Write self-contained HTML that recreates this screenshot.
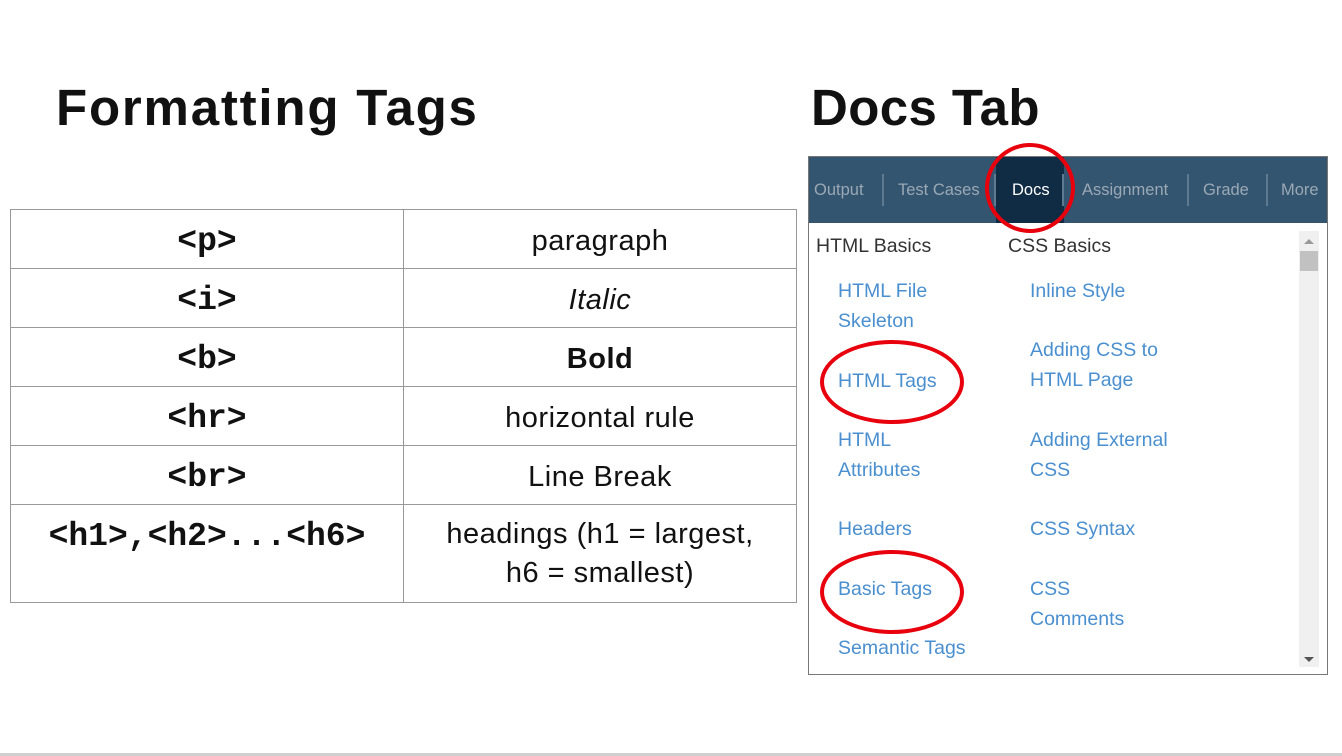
<!DOCTYPE html><html><head><style>
body{margin:0;width:1342px;height:756px;background:#fff;position:relative;overflow:hidden;font-family:"Liberation Sans",sans-serif}
.a{position:absolute}
h1{position:absolute;margin:0;font-size:51px;font-weight:bold;top:78px;line-height:60px;color:#111}
table{position:absolute;left:10px;top:209px;border-collapse:collapse;width:787px}
td{border:1px solid #999;text-align:center;font-size:29px;height:54px;padding:4px 0 0 0;color:#111;letter-spacing:0.5px}
td.c{font-family:"Liberation Mono",monospace;font-weight:bold;width:392px;font-size:33px;letter-spacing:0}
.tab{position:absolute;top:176px;font-size:16.5px;color:#9aa8b5;line-height:28px}
.sep{position:absolute;top:174px;width:2px;height:32px;background:#5d7a90}
.l{position:absolute;color:#4a8fcf;font-size:19.5px;line-height:30px}
.o{position:absolute;border:4px solid #e8000d;border-radius:50%}
</style></head><body>
<h1 style="left:56px;letter-spacing:1.8px">Formatting Tags</h1>
<h1 style="left:811px;letter-spacing:0.4px">Docs Tab</h1>
<table>
<tr><td class="c">&lt;p&gt;</td><td>paragraph</td></tr>
<tr><td class="c">&lt;i&gt;</td><td><i>Italic</i></td></tr>
<tr><td class="c">&lt;b&gt;</td><td><b>Bold</b></td></tr>
<tr><td class="c">&lt;hr&gt;</td><td>horizontal rule</td></tr>
<tr><td class="c">&lt;br&gt;</td><td>Line Break</td></tr>
<tr><td class="c" style="vertical-align:top;padding-top:13px;height:84px">&lt;h1&gt;,&lt;h2&gt;...&lt;h6&gt;</td><td style="height:97px;line-height:39px;padding-top:0">headings (h1 = largest,<br>h6 = smallest)</td></tr>
</table>
<div class="a" style="left:808px;top:156px;width:518px;height:517px;border:1px solid #777;overflow:hidden">
<div class="a" style="left:0;top:0;width:518px;height:66px;background:#34556f"></div>
<div class="a" style="left:187px;top:0;width:68px;height:66px;background:#102b44"></div>
<div class="a" style="left:490px;top:74px;width:20px;height:436px;background:#f0f0f0"></div>
<div class="a" style="left:491px;top:94px;width:18px;height:20px;background:#c1c1c1"></div>
<div class="a" style="left:495px;top:82px;border:5px solid transparent;border-bottom:5px solid #999;border-top:0"></div>
<div class="a" style="left:495px;top:500px;border:5px solid transparent;border-top:5px solid #555;border-bottom:0"></div>
</div>
<div class="tab" style="left:814px">Output</div>
<div class="sep" style="left:882px"></div>
<div class="tab" style="left:898px">Test Cases</div>
<div class="sep" style="left:994px"></div>
<div class="tab" style="left:1012px;color:#fff">Docs</div>
<div class="sep" style="left:1062px"></div>
<div class="tab" style="left:1082px">Assignment</div>
<div class="sep" style="left:1187px"></div>
<div class="tab" style="left:1203px">Grade</div>
<div class="sep" style="left:1266px"></div>
<div class="tab" style="left:1281px">More</div>
<div class="a" style="left:816px;top:232px;font-size:19.5px;color:#333;line-height:28px">HTML Basics</div>
<div class="a" style="left:1008px;top:232px;font-size:19.5px;color:#333;line-height:28px">CSS Basics</div>
<div class="l" style="left:838px;top:276px">HTML File<br>Skeleton</div>
<div class="l" style="left:838px;top:366px">HTML Tags</div>
<div class="l" style="left:838px;top:425px">HTML<br>Attributes</div>
<div class="l" style="left:838px;top:514px">Headers</div>
<div class="l" style="left:838px;top:574px">Basic Tags</div>
<div class="l" style="left:838px;top:633px">Semantic Tags</div>
<div class="l" style="left:1030px;top:276px">Inline Style</div>
<div class="l" style="left:1030px;top:335px">Adding CSS to<br>HTML Page</div>
<div class="l" style="left:1030px;top:425px">Adding External<br>CSS</div>
<div class="l" style="left:1030px;top:514px">CSS Syntax</div>
<div class="l" style="left:1030px;top:574px">CSS<br>Comments</div>
<div class="o" style="left:985px;top:143px;width:82px;height:82px"></div>
<div class="o" style="left:820px;top:340px;width:136px;height:76px"></div>
<div class="o" style="left:820px;top:550px;width:136px;height:76px"></div>
<div class="a" style="left:0;top:753px;width:1342px;height:3px;background:#d0d0d0"></div>
</body></html>
